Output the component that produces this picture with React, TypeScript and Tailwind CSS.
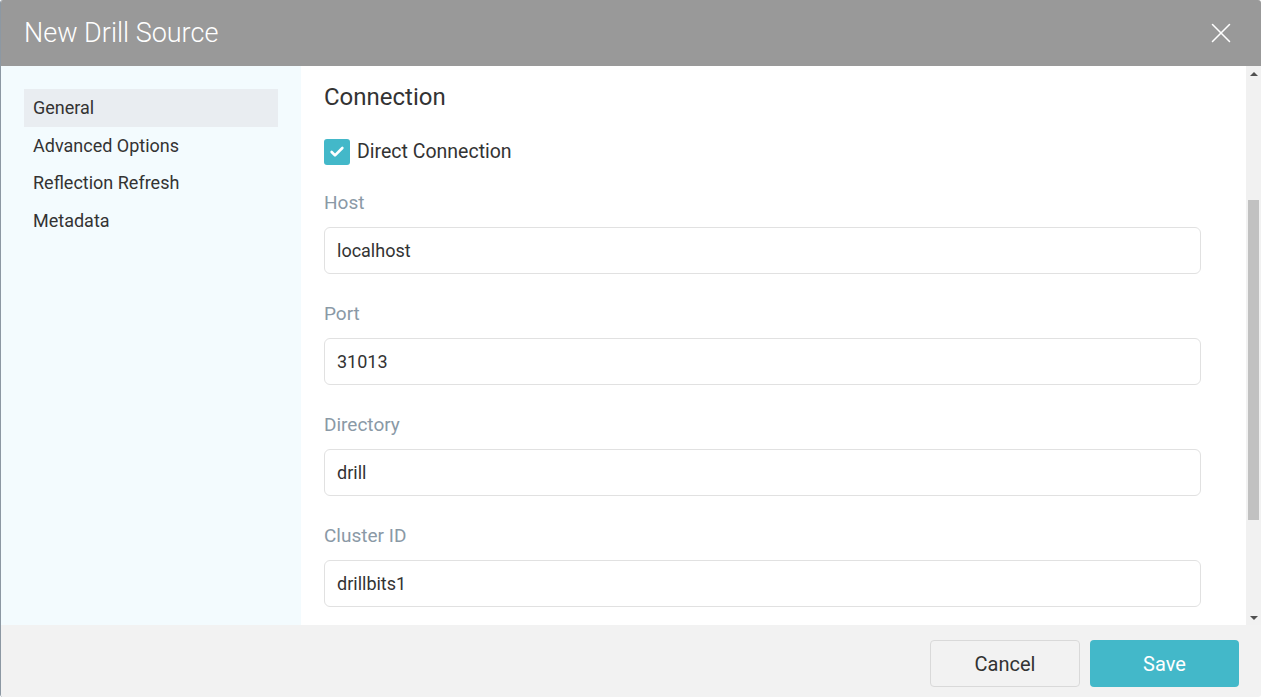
import React from "react";
import { Check, X } from "lucide-react";

const navItems = ["General", "Advanced Options", "Reflection Refresh", "Metadata"];

const fields = [
    { label: "Host", value: "localhost" },
    { label: "Port", value: "31013" },
    { label: "Directory", value: "drill" },
    { label: "Cluster ID", value: "drillbits1" },
];

const Field: React.FC<{ label: string; value: string }> = ({ label, value }) => (
    <div className="flex flex-col">
        <label className="h-[24px] text-[19px] leading-[24px] text-[#8a99a6]">{label}</label>
        <input
            readOnly
            value={value}
            className="mt-[12px] h-[47px] w-[877px] rounded-[6px] border border-[#e1e1e1] bg-white px-[12px] text-[18px] text-[#333] outline-none"
        />
    </div>
);

const Scrollbar: React.FC = () => (
    <div className="flex w-[15px] shrink-0 flex-col bg-[#f1f1f1]">
        <div className="flex h-[15px] items-center justify-center">
            <div className="h-0 w-0 border-x-[4px] border-b-[4px] border-x-transparent border-b-[#505050]" />
        </div>
        <div className="h-[119px]" />
        <div className="mx-[2px] h-[320px] bg-[#c1c1c1]" />
        <div className="flex-1" />
        <div className="flex h-[15px] items-center justify-center">
            <div className="h-0 w-0 border-x-[4px] border-t-[4px] border-x-transparent border-t-[#505050]" />
        </div>
    </div>
);

export default function App() {
    return (
        <div
            className="flex h-[697px] w-[1261px] flex-col overflow-hidden rounded-[3px] border-l border-[#8c98a3] bg-white"
            style={{ fontFamily: "Roboto, 'Liberation Sans', sans-serif" }}
        >
            <div className="flex h-[66px] shrink-0 items-center justify-between bg-[#999999] pl-[23px] pr-[23px]">
                <h2 className="text-[27px] font-light text-white">New Drill Source</h2>
                <X className="h-[34px] w-[34px] text-white" strokeWidth={1.1} />
            </div>

            <div className="flex min-h-0 flex-1">
                <div className="w-[300px] shrink-0 bg-[#f3fbfe] px-[23px] pt-[23px]">
                    {navItems.map((item, i) => (
                        <div
                            key={item}
                            className={`flex h-[37.5px] items-center px-[9px] text-[18px] text-[#333] ${
                                i === 0 ? "bg-[#e9edf1]" : ""
                            }`}
                        >
                            {item}
                        </div>
                    ))}
                </div>

                <div className="flex min-w-0 flex-1 flex-col pl-[23px] pt-[16px]">
                    <h3 className="h-[30px] text-[24px] leading-[30px] text-[#333]">Connection</h3>
                    <div className="mt-[25px] flex items-center gap-[7px]">
                        <span className="flex h-[26px] w-[26px] items-center justify-center rounded-[3px] bg-[#43b8c9]">
                            <Check className="h-[16px] w-[16px] text-white" strokeWidth={4} />
                        </span>
                        <span className="text-[19.5px] text-[#333]">Direct Connection</span>
                    </div>
                    <div className="mt-[25px] flex flex-col gap-[28px]">
                        {fields.map((f) => (
                            <Field key={f.label} label={f.label} value={f.value} />
                        ))}
                    </div>
                </div>

                <Scrollbar />
            </div>

            <div className="flex h-[72px] shrink-0 items-start justify-end gap-[10px] bg-[#f2f2f2] pr-[22px] pt-[15px]">
                <button className="h-[47px] w-[150px] rounded-[4px] border border-[#d9d9d9] bg-[#f2f2f2] text-[20px] text-[#333]">
                    Cancel
                </button>
                <button className="h-[47px] w-[149px] rounded-[4px] bg-[#43b8c9] text-[20px] text-white">
                    Save
                </button>
            </div>
        </div>
    );
}
